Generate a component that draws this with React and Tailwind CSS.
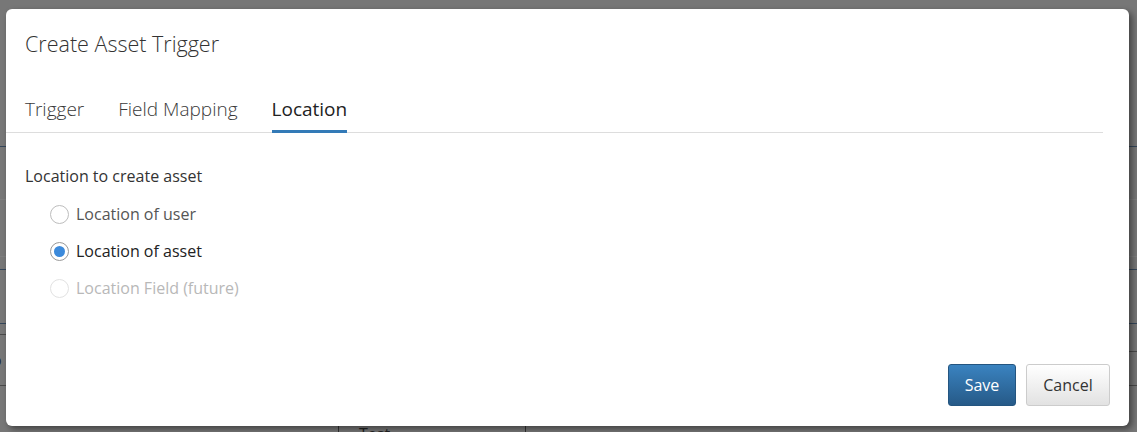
export default function App() {
  const font = { fontFamily: '"Open Sans", Lato, sans-serif' };
  return (
    <div className="relative w-[1137px] h-[432px] overflow-hidden bg-[#777777]" style={font}>
      {/* background page (dimmed) */}
      <div className="flex flex-col">
        <div className="h-[147px] border-b border-[#34465a]" />
        <div className="h-[53px] border-b border-[#7e7e7e]" />
        <div className="h-[57px] border-b border-[#7e7e7e]" />
        <div className="h-[13px] border-b border-[#34465a]" />
        <div className="h-[54px] border-b border-[#34465a]" />
        <div className="flex h-[62px]">
          <div className="w-[200px] flex flex-col">
            <div className="h-[11px] border-b border-[#4a4a4a]" />
            <div className="h-[51px] border-b border-[#4a4a4a] flex items-center text-[16px] text-[#222] -ml-[8px]">o</div>
          </div>
          <div className="flex-1" />
          <div className="w-[200px] flex flex-col">
            <div className="h-[36px] border-b border-[#4a4a4a]" />
            <div className="h-[43px] border-b border-[#4a4a4a]" />
          </div>
        </div>
        <div className="flex pl-[338px] pt-[39px]">
          <div className="w-[188px] h-[30px] border-x border-[#333] flex justify-between px-[20px] text-[16px] text-[#222] leading-[18px]">
            <span>Test</span>
            <span>⌄</span>
          </div>
        </div>
      </div>

      {/* modal */}
      <div className="absolute left-[6px] top-[9px] w-[1123px] h-[417px] bg-white rounded-[6px] shadow-[3px_3px_6px_rgba(0,0,0,0.45)] flex flex-col">
        <div className="pl-[19px] pt-[22px] text-[21.5px] leading-[26px] text-[#333] font-light">
          Create Asset Trigger
        </div>
        <div className="mt-[40px] mr-[26px] border-b border-[#dddddd] flex pl-[19px] gap-[34px] text-[19px] leading-[24px]">
          <div className="text-[#3a3a3a] font-light pb-[11px]">Trigger</div>
          <div className="text-[#3a3a3a] font-light pb-[11px]">Field Mapping</div>
          <div className="text-[#222] pb-[8px] border-b-[3px] border-[#337ab7] -mb-[1px]">Location</div>
        </div>
        <div className="pl-[19px] pt-[33px] text-[16px] leading-[20px] text-[#333]">
          Location to create asset
        </div>
        <div className="pl-[44px] pt-[18px] flex flex-col gap-[17px] text-[16px] leading-[20px]">
          <div className="flex items-center gap-[7px] text-[#555]">
            <span className="w-[19px] h-[19px] rounded-full border border-[#bdbdbd] bg-white" />
            <span>Location of user</span>
          </div>
          <div className="flex items-center gap-[7px] text-[#222]">
            <span className="w-[19px] h-[19px] rounded-full border border-[#999] bg-white flex items-center justify-center">
              <span className="w-[11px] h-[11px] rounded-full bg-[#3c8adb]" />
            </span>
            <span className="font-medium">Location of asset</span>
          </div>
          <div className="flex items-center gap-[7px] text-[#b8b8b8]">
            <span className="w-[19px] h-[19px] rounded-full border border-[#e2e2e2] bg-white" />
            <span>Location Field (future)</span>
          </div>
        </div>
        <div className="flex-1" />
        <div className="flex justify-end gap-[10px] pr-[19px] pb-[20px]">
          <button className="w-[68px] h-[42px] rounded-[3px] border border-[#245580] bg-gradient-to-b from-[#3a83c0] to-[#265a88] text-white text-[16px]">
            Save
          </button>
          <button className="w-[84px] h-[42px] rounded-[3px] border border-[#cccccc] bg-gradient-to-b from-white to-[#e2e2e2] text-[#333] text-[16px]">
            Cancel
          </button>
        </div>
      </div>
    </div>
  );
}
